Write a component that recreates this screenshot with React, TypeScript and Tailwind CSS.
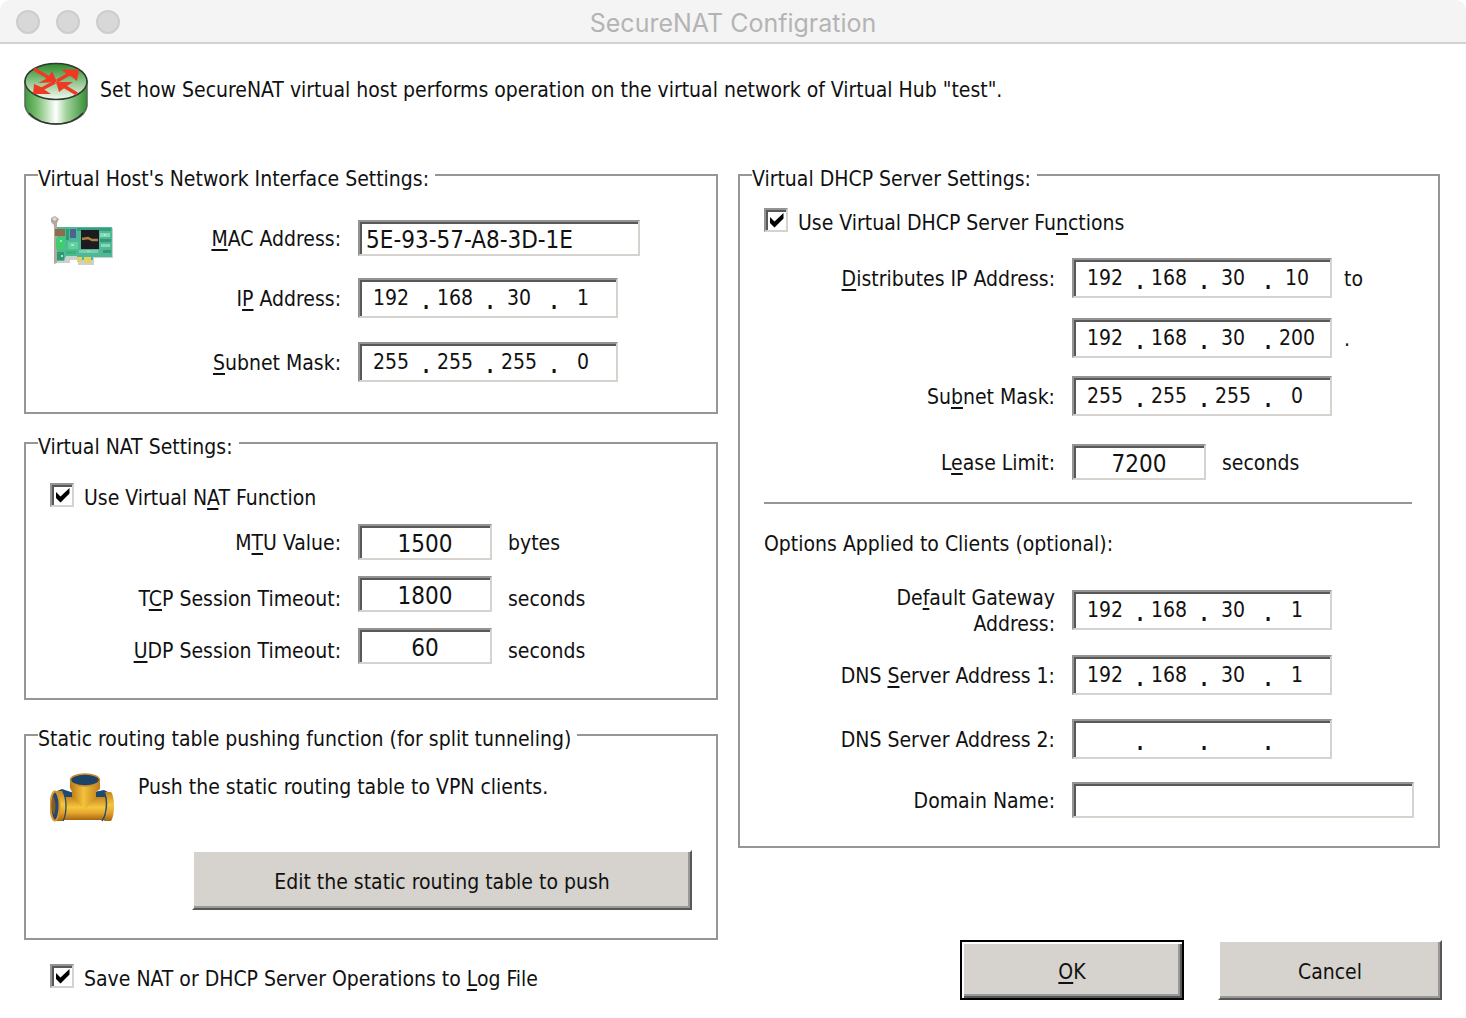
import { useId, type ReactNode } from "react";

const K = ({ children }: { children: ReactNode }) => (
  <span className="underline decoration-2 underline-offset-[3px]">{children}</span>
);

const sunken =
  "border-2 border-t-[#949494] border-l-[#949494] border-r-[#d6d3ce] border-b-[#d6d3ce] bg-white shadow-[inset_2px_2px_0_#585858]";

function RouterIcon() {
  return (
    <svg viewBox="0 0 64 64" className="size-16 shrink-0" aria-hidden="true">
      <defs>
        <linearGradient id="routerSide" x1="0" x2="1" y1="0" y2="0">
          <stop offset="0" stopColor="#3f9a3c" />
          <stop offset="0.2" stopColor="#7cc074" />
          <stop offset="0.5" stopColor="#ffffff" />
          <stop offset="0.66" stopColor="#a5d49f" />
          <stop offset="1" stopColor="#358f33" />
        </linearGradient>
        <linearGradient id="routerTop" x1="0" x2="0" y1="0" y2="1">
          <stop offset="0" stopColor="#2c8a2c" />
          <stop offset="0.5" stopColor="#8cc488" />
          <stop offset="1" stopColor="#f4faf3" />
        </linearGradient>
      </defs>
      <path d="M1 19V44C3 55 17 62 32 62S61 55 63 44V19Z" fill="url(#routerSide)" stroke="#5b6a5b" strokeWidth="1.5" />
      <path d="M5 51C12 59 22 62 32 62S52 59 59 51" fill="none" stroke="#333" strokeWidth="1.5" />
      <ellipse cx="32" cy="19.500" rx="31" ry="18" fill="url(#routerTop)" stroke="#2e3a2e" strokeWidth="1.5" />
      <g fill="none" stroke="#ee3a24" strokeWidth="3.500">
        <path d="M10 7L27 17" />
        <path d="M33 19L47 11" />
        <path d="M31 20L16 28" />
        <path d="M53 32L38 23" />
      </g>
      <g fill="#ee3a24">
        <path d="M28 9L33 20L14 21L21 17.500L25 14Z" />
        <path d="M37 7.500H55L53 19L48 15L43 12Z" />
        <path d="M10 22L9 32H27L21 28L17 25Z" />
        <path d="M32 20H49L43 24L39 27L35 30Z" />
      </g>
    </svg>
  );
}

function NetworkCardIcon() {
  return (
    <svg viewBox="0 0 64 52" className="h-[52px] w-16 shrink-0" aria-hidden="true">
      <path d="M7 13H63V43H44V50H28V45H20V48H7Z" fill="#8a9a94" opacity="0.45" />
      <path d="M5 12H62V42H43V45H27V41H16L14 46H5Z" fill="#4fb894" />
      <path d="M1 3L5 1L9 4L7 8V48L4 49V10L1 7Z" fill="#b3a79e" />
      <path d="M2 4L5 2L7 4L5 6Z" fill="#e4dcd6" />
      <rect x="5" y="14" width="10" height="7" fill="#8d6b4d" />
      <rect x="20" y="14" width="6" height="9" fill="#4b648f" />
      <path d="M16 14H19V25H16Z" fill="#2f9876" />
      <path d="M6 23H15V34H6Z" fill="#3fce6c" />
      <path d="M18 27H28V34H18Z" fill="#62cf9f" />
      <path d="M7 37H14V45H7Z" fill="#2d9a72" />
      <path d="M16 36H26V39H16Z" fill="#36b56e" />
      <path d="M27 13H61V16H27Z" fill="#3a9c7f" />
      <path d="M50 18H60V22H50ZM51 29H60V32H51Z" fill="#86d8bb" />
      <path d="M50 24H61V27H50ZM53 35H61V38H53Z" fill="#35967a" />
      <path d="M29 35H48V38H29Z" fill="#7acdae" />
      <rect x="31" y="15" width="18" height="19" fill="#1d1a20" />
      <path d="M32 24L38 23L42 25L48 25" fill="none" stroke="#a98240" strokeWidth="2.500" />
      <path d="M27 42H32V47H27ZM34 42H41V48H34Z" fill="#e6cf65" />
      <g fill="#a7e6cc">
        <rect x="10" y="25" width="2" height="2" />
        <rect x="21" y="29" width="3" height="2" />
        <rect x="54" y="19" width="2" height="2" />
        <rect x="11" y="40" width="2" height="2" />
        <rect x="37" y="36" width="3" height="1" />
      </g>
    </svg>
  );
}

function PipeIcon() {
  return (
    <svg viewBox="0 0 64 50" className="h-[50px] w-16 shrink-0" aria-hidden="true">
      <defs>
        <linearGradient id="pipeH" x1="0" x2="0" y1="0" y2="1">
          <stop offset="0" stopColor="#c8841c" />
          <stop offset="0.45" stopColor="#f6c63f" />
          <stop offset="0.7" stopColor="#e5a52c" />
          <stop offset="1" stopColor="#a86410" />
        </linearGradient>
        <linearGradient id="pipeV" x1="0" x2="1" y1="0" y2="0">
          <stop offset="0" stopColor="#b87416" />
          <stop offset="0.45" stopColor="#f4c23c" />
          <stop offset="1" stopColor="#c07c1a" />
        </linearGradient>
      </defs>
      <path d="M7 18L12 16L24 20V27H9ZM44 19L54 17L60 20V27H44Z" fill="#1c4a72" />
      <rect x="10" y="24" width="46" height="23" fill="url(#pipeH)" />
      <path d="M20 8H50V16L46 19V25L35 36L22 25V19L20 15Z" fill="url(#pipeV)" />
      <path d="M4 18H12C16 22 17 40 13 48H5Z" fill="url(#pipeH)" />
      <path d="M13 19C17 26 17 40 13 48" fill="none" stroke="#24506a" strokeWidth="1.300" />
      <ellipse cx="5" cy="33" rx="4.500" ry="14.500" fill="#1f4b70" stroke="#d8962a" strokeWidth="2" />
      <path d="M3 23C6 27 6 37 4 42L2 37V26Z" fill="#8d5a1f" />
      <path d="M55 19H61C65 24 65 42 61 48H54C58 40 58 27 55 19Z" fill="url(#pipeH)" />
      <path d="M54 19C58 27 57 41 52 48" fill="none" stroke="#24506a" strokeWidth="1.500" />
      <ellipse cx="35" cy="7" rx="14.500" ry="6" fill="#1c4468" stroke="#c98a2a" strokeWidth="1.500" />
    </svg>
  );
}

function Panel({ title, className, children }: { title: string; className: string; children: ReactNode }) {
  return (
    <fieldset className={`border-2 border-[#969696] px-6 ${className}`}>
      <legend className="-ml-3 pt-2 pr-1.5 leading-7">{title}</legend>
      {children}
    </fieldset>
  );
}

function Check({ children }: { children: ReactNode }) {
  return (
    <label className="flex items-center gap-2.5 leading-[30px]">
      <span className="relative flex self-start">
        <input type="checkbox" defaultChecked className={`peer size-6 appearance-none ${sunken}`} />
        <svg viewBox="0 0 24 24" className="pointer-events-none absolute inset-0 hidden peer-checked:block" aria-hidden="true">
          <path d="M6 9L10.500 13.500L19.500 5V10.500L10.500 19.500L6 15Z" fill="#000" />
        </svg>
      </span>
      <span>{children}</span>
    </label>
  );
}

function Row({ label, id, end, wide, children }: { label: ReactNode; id: string; end?: boolean; wide?: boolean; children: ReactNode }) {
  return (
    <div className={`flex gap-4 ${end ? "items-end" : "items-center"}`}>
      <label
        htmlFor={id}
        className={`shrink-0 pr-px text-right leading-[26px] ${end ? "" : "pt-0.5"} ${wide ? "w-[228px]" : "w-[292px]"}`}
      >
        {label}
      </label>
      {children}
    </div>
  );
}

function IpField({ id, name, value }: { id: string; name: string; value: string[] }) {
  return (
    <div role="group" aria-label={name} className={`flex h-10 w-[260px] shrink-0 items-center pl-[7px] ${sunken}`}>
      {value.map((v, i) => (
        <span key={i} className="flex items-center">
          <input
            id={i === 0 ? id : undefined}
            aria-label={`${name} part ${i + 1}`}
            defaultValue={v}
            className="h-8 w-12 bg-transparent text-center outline-none"
          />
          {i < 3 && <span className="w-4 pl-1.5 text-center text-[32px] leading-9">.</span>}
        </span>
      ))}
    </div>
  );
}

function IpRow({ label, name, value, wide, after }: { label: ReactNode; name: string; value: string[]; wide?: boolean; after?: string }) {
  const id = useId();
  return (
    <Row label={label} id={id} wide={wide}>
      <IpField id={id} name={name} value={value} />
      {after && <span className="-ml-1 pt-0.5">{after}</span>}
    </Row>
  );
}

function NumberRow({ label, value, unit, end }: { label: ReactNode; value: string; unit: string; end?: boolean }) {
  const id = useId();
  return (
    <Row label={label} id={id} end={end}>
      <input id={id} defaultValue={value} className={`h-9 w-[134px] pt-1 text-center text-[24px] outline-none ${sunken}`} />
      <span className={`leading-[26px] ${end ? "" : "pt-0.5"}`}>{unit}</span>
    </Row>
  );
}

const buttonFace =
  "bg-[#d6d3ce] border-2 border-t-white border-l-white border-r-[#585858] border-b-[#585858] shadow-[inset_-2px_-2px_0_#999]";

export default function App() {
  return (
    <main className="min-h-screen bg-white font-['DejaVu_Sans_Condensed','DejaVu_Sans',sans-serif] text-[21px] leading-7 text-[#111]">
      <header className="relative flex h-11 items-center justify-center rounded-t-[10px] border-b-2 border-[#d2d2d2] bg-[#f4f4f4] pt-1">
        <div className="absolute top-2.5 left-4 flex gap-4">
          <button aria-label="Close" className="size-6 rounded-full border-2 border-[#cdcdcd] bg-[#d8d8d8]" />
          <button aria-label="Minimize" className="size-6 rounded-full border-2 border-[#cdcdcd] bg-[#d8d8d8]" />
          <button aria-label="Zoom" className="size-6 rounded-full border-2 border-[#cdcdcd] bg-[#d8d8d8]" />
        </div>
        <h1 className="font-['Inter',sans-serif] text-[25px] text-[#b4b4b4]">SecureNAT Configration</h1>
      </header>

      <div className="px-6 py-[18px]">
        <div className="flex gap-3">
          <RouterIcon />
          <p className="pt-3.5">Set how SecureNAT virtual host performs operation on the virtual network of Virtual Hub "test".</p>
        </div>

        <div className="grid grid-cols-[694fr_704fr] gap-5 pt-[31px]">
          <div className="flex flex-col">
            <Panel title="Virtual Host's Network Interface Settings:" className="pb-[30px]">
              <div className="flex">
                <div className="pt-[22px]">
                  <NetworkCardIcon />
                </div>
                <div className="flex flex-col pt-[27px]">
                  <div className="pb-[22px]">
                    <Row label={<><K>M</K>AC Address:</>} id="mac" wide>
                      <input id="mac" defaultValue="5E-93-57-A8-3D-1E" className={`h-9 w-[282px] px-1.5 pt-1 text-[24px] outline-none ${sunken}`} />
                    </Row>
                  </div>
                  <div className="flex flex-col gap-6">
                    <IpRow label={<>I<K>P</K> Address:</>} name="IP address" value={["192", "168", "30", "1"]} wide />
                    <IpRow label={<><K>S</K>ubnet Mask:</>} name="Subnet mask" value={["255", "255", "255", "0"]} wide />
                  </div>
                </div>
              </div>
            </Panel>

            <Panel title="Virtual NAT Settings:" className="mt-[11px] pt-[22px] pb-[34px]">
              <Check>Use Virtual N<K>A</K>T Function</Check>
              <div className="flex flex-col gap-4 pt-[11px]">
                <NumberRow label={<>M<K>T</K>U Value:</>} value="1500" unit="bytes" />
                <NumberRow label={<>T<K>C</K>P Session Timeout:</>} value="1800" unit="seconds" end />
                <NumberRow label={<><K>U</K>DP Session Timeout:</>} value="60" unit="seconds" end />
              </div>
            </Panel>

            <Panel title="Static routing table pushing function (for split tunneling)" className="mt-[17px] pt-5 pb-7">
              <div className="flex gap-6">
                <PipeIcon />
                <p>Push the static routing table to VPN clients.</p>
              </div>
              <div className="flex justify-end pt-[27px]">
                <button className={`h-[60px] w-[500px] pt-1 ${buttonFace}`}>Edit the static routing table to push</button>
              </div>
            </Panel>

            <div className="pt-6 pl-[26px]">
              <Check>Save NAT or DHCP Server Operations to <K>L</K>og File</Check>
            </div>
          </div>

          <div className="flex flex-col">
            <Panel title="Virtual DHCP Server Settings:" className="mr-0.5 pt-[15px] pb-7">
              <Check>Use Virtual DHCP Server Fu<K>n</K>ctions</Check>
              <div className="flex flex-col gap-5 pt-5 pb-[18px]">
                <IpRow label={<><K>D</K>istributes IP Address:</>} name="First distributed IP address" value={["192", "168", "30", "10"]} after="to" />
                <IpRow label="" name="Last distributed IP address" value={["192", "168", "30", "200"]} after="." />
              </div>
              <IpRow label={<>Su<K>b</K>net Mask:</>} name="DHCP subnet mask" value={["255", "255", "255", "0"]} />
              <div className="pt-7 pb-[22px]">
                <NumberRow label={<>L<K>e</K>ase Limit:</>} value="7200" unit="seconds" />
              </div>
              <hr className="mr-0.5 border-t-2 border-[#969696]" />
              <p className="pt-[26px] pb-[31px]">Options Applied to Clients (optional):</p>
              <div className="flex flex-col gap-6">
                <div className="-mt-1.5 -mb-1.5">
                  <IpRow label={<>De<K>f</K>ault Gateway<br />Address:</>} name="Default gateway address" value={["192", "168", "30", "1"]} />
                </div>
                <IpRow label={<>DNS <K>S</K>erver Address 1:</>} name="DNS server address 1" value={["192", "168", "30", "1"]} />
                <IpRow label="DNS Server Address 2:" name="DNS server address 2" value={["", "", "", ""]} />
              </div>
              <div className="pt-[23px]">
                <Row label="Domain Name:" id="domain">
                  <input id="domain" className={`h-9 min-w-0 flex-1 px-1.5 text-[24px] outline-none ${sunken}`} />
                </Row>
              </div>
            </Panel>

            <div className="flex justify-end gap-[34px] pt-[92px]">
              <button className="h-[60px] w-56 border-2 border-black bg-[#d6d3ce] pt-1 shadow-[inset_2px_2px_0_#fff,inset_-2px_-2px_0_#585858,inset_-4px_-4px_0_#999]">
                <K>O</K>K
              </button>
              <button className={`h-[60px] w-56 pt-1 ${buttonFace}`}>Cancel</button>
            </div>
          </div>
        </div>
      </div>
    </main>
  );
}
